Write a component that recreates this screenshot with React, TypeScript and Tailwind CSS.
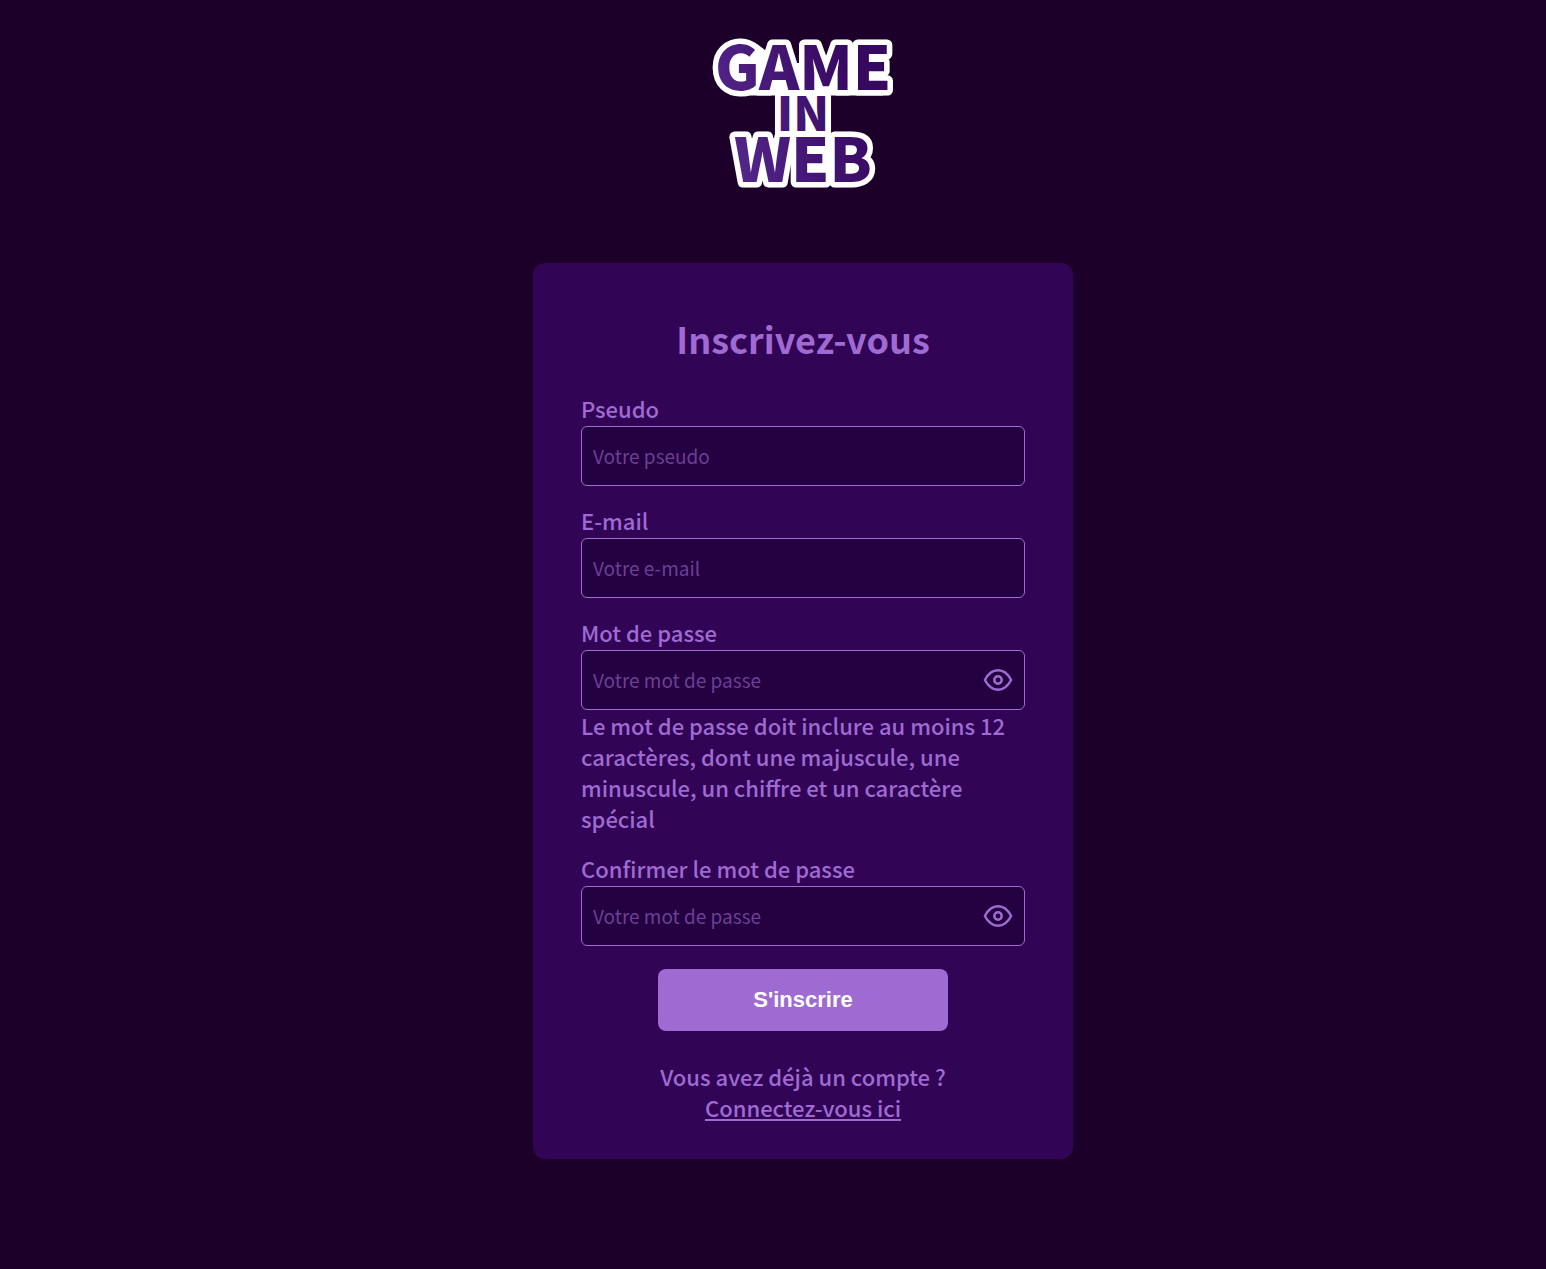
import { useState } from 'react';
import type { InputHTMLAttributes } from 'react';

const Logo = () => (
  <svg viewBox="0 0 180 150" className="h-[150px] w-[180px] overflow-visible" role="img" aria-label="Game in Web">
    <defs>
      <linearGradient id="logo-fill" gradientUnits="userSpaceOnUse" x1="10" y1="110" x2="150" y2="60">
        <stop offset="0" stopColor="#54278c" />
        <stop offset="1" stopColor="#360860" />
      </linearGradient>
    </defs>
    {/* white backing that closes the gaps between the outlined letters */}
    <path
      fill="#fff"
      d="M44 6L52 12L60 25H140V12H170V57.500H118V96H130V147H90V115H42L36 100H62V57.500H28V30Z"
    />
    <g
      fill="url(#logo-fill)"
      stroke="#fff"
      strokeWidth="11"
      strokeLinejoin="round"
      paintOrder="stroke"
      textAnchor="middle"
      className="font-['Noto_Sans_CJK_JP',sans-serif] font-black"
    >
      <text x="90" y="93" fontSize="47">IN</text>
      <text x="90" y="52" fontSize="61">GAME</text>
      <text x="90" y="144" fontSize="61">WEB</text>
    </g>
  </svg>
);

const EyeIcon = () => (
  <svg
    viewBox="0 0 30 24"
    className="h-6 w-[30px]"
    fill="none"
    stroke="currentColor"
    strokeWidth="2.5"
    strokeLinejoin="round"
    aria-hidden="true"
  >
    <path d="M1.900 12C5 6 9.500 2.300 15 2.300S25 6 28.100 12C25 18 20.500 21.700 15 21.700S5 18 1.900 12Z" />
    <circle cx="15" cy="12" r="3.700" />
  </svg>
);

type FieldProps = InputHTMLAttributes<HTMLInputElement> & { id: string; label: string };

const labelStyle = 'block pb-1 leading-7';
const inputStyle =
  'block h-[60px] w-full rounded-md border border-[#9f6bd2] bg-[#240140] px-[11px] pb-0.5 text-[19px] font-normal text-[#9f6bd2] placeholder:text-[#9f6bd2]/60 outline-none focus:ring-1 focus:ring-[#9f6bd2]';

const Field = ({ id, label, ...props }: FieldProps) => (
  <div>
    <label htmlFor={id} className={labelStyle}>{label}</label>
    <input id={id} className={inputStyle} {...props} />
  </div>
);

const PasswordField = ({ id, label, ...props }: FieldProps) => {
  const [visible, setVisible] = useState(false);

  return (
    <div>
      <label htmlFor={id} className={labelStyle}>{label}</label>
      <div className="relative">
        <input id={id} type={visible ? 'text' : 'password'} className={inputStyle} {...props} />
        <button
          type="button"
          aria-label="Afficher le mot de passe"
          onClick={() => setVisible(!visible)}
          className="absolute inset-y-0 right-3 flex items-center"
        >
          <EyeIcon />
        </button>
      </div>
    </div>
  );
};

const App = () => {
  return (
    <div className="flex min-h-screen flex-col items-center bg-[#1d0029] pt-[38px] pb-[110px] pl-[60px] font-['Noto_Sans_CJK_JP',sans-serif] text-[22px] leading-[31px] font-medium text-[#9f6bd2]">
      <Logo />
      <main className="mt-[75px] w-full max-w-[540px] rounded-xl bg-[#320456] px-12 pt-12 pb-9">
        <h1 className="text-center text-[36px] leading-[54px] font-bold">Inscrivez-vous</h1>
        <form className="mt-[29px] flex flex-col" onSubmit={(e) => e.preventDefault()}>
          <div className="flex flex-col gap-5">
            <Field id="pseudo" label="Pseudo" type="text" placeholder="Votre pseudo" />
            <Field id="email" label="E-mail" type="email" placeholder="Votre e-mail" />
            <div>
              <PasswordField id="password" label="Mot de passe" placeholder="Votre mot de passe" />
              <p>
                Le mot de passe doit inclure au moins 12 caractères, dont une majuscule, une minuscule, un chiffre et un
                caractère spécial
              </p>
            </div>
            <PasswordField id="confirm" label="Confirmer le mot de passe" placeholder="Votre mot de passe" />
          </div>
          <button
            type="submit"
            className="mt-[23px] self-center rounded-lg bg-[#9f6bd2] px-[95px] py-4 font-['Liberation_Sans',sans-serif] text-[22px] leading-[30px] font-bold text-white"
          >
            S'inscrire
          </button>
        </form>
        <p className="mt-[30px] text-center">
          Vous avez déjà un compte ?
          <br />
          <a href="#connexion" className="underline">Connectez-vous ici</a>
        </p>
      </main>
    </div>
  );
};

export default App;
